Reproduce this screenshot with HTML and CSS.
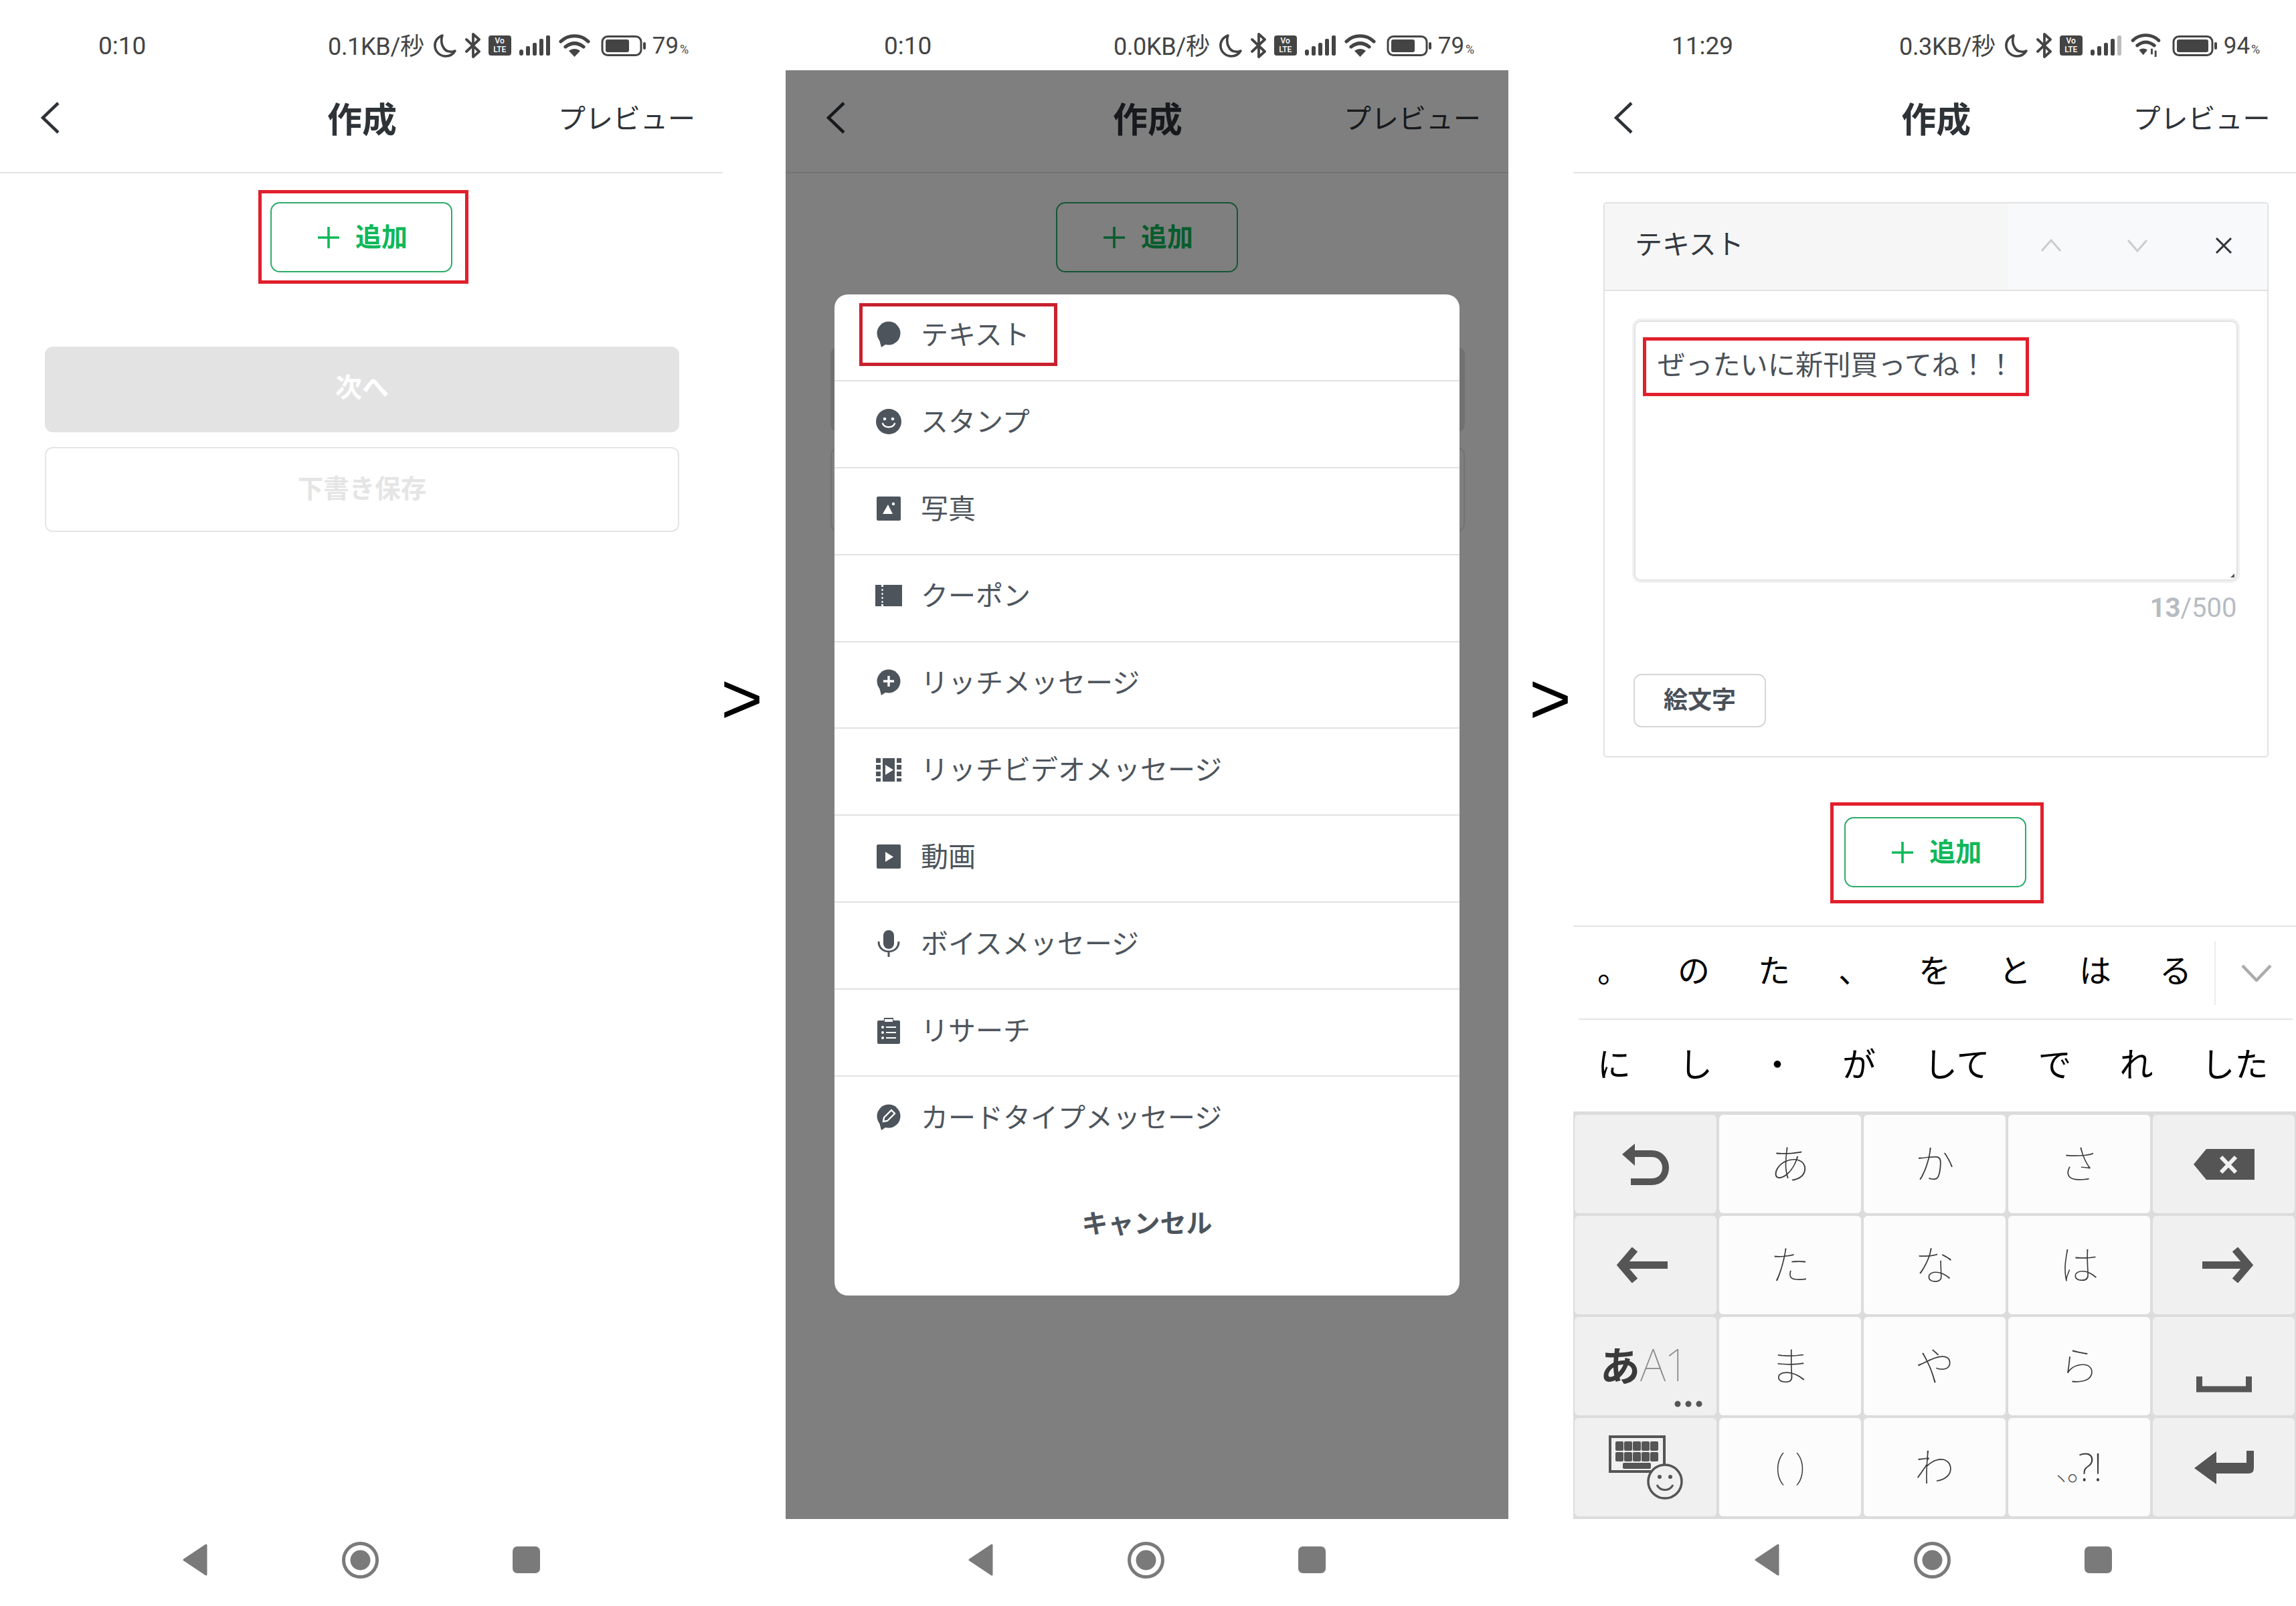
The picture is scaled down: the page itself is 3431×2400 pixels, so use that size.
FILE: index.html
```html
<!DOCTYPE html>
<html lang="ja">
<head>
<meta charset="utf-8">
<title>作成</title>
<link rel="stylesheet" href="styles.css">
</head>
<body>
<svg class="sprites" xmlns="http://www.w3.org/2000/svg">
  <symbol id="s-moon" viewBox="0 0 37 37"><path d="M15 3C7 6 3 13 4 20c1 8 8 14 16 14 6 0 11-3 14-8-3 1-5 2-8 1C17 27 11 14 15 3z" fill="none" stroke="currentColor" stroke-width="3.6" stroke-linejoin="round"/></symbol>
  <symbol id="s-bt" viewBox="0 0 23 38"><path d="M2 10l19 18-9 8V2l9 8L2 28" fill="none" stroke="currentColor" stroke-width="3.8" stroke-linejoin="round" stroke-linecap="round"/></symbol>
  <symbol id="s-signal" viewBox="0 0 47 30"><g fill="currentColor"><rect x="0" y="21" width="6" height="9" rx="3"/><rect x="10" y="16" width="6" height="14" rx="2"/><rect x="20" y="11" width="6" height="19" rx="2"/><rect x="30" y="5" width="6" height="25" rx="2"/><rect x="40" y="0" width="6" height="30" rx="2"/></g></symbol>
  <symbol id="s-signal-weak" viewBox="0 0 47 30"><g fill="currentColor"><rect x="0" y="21" width="6" height="9" rx="3"/><rect x="10" y="16" width="6" height="14" rx="2"/><rect x="20" y="11" width="6" height="19" rx="2"/><rect x="30" y="5" width="6" height="25" rx="2"/></g><rect x="40" y="0" width="6" height="30" rx="2" fill="#bdbdbd"/></symbol>
  <symbol id="s-wifi" viewBox="0 0 47 34"><g fill="none" stroke="currentColor" stroke-width="5.2" stroke-linecap="round"><path d="M3 11C14 0 33 0 44 11"/><path d="M10 19c9-7 18-7 27 0"/></g><path d="M15 25c5-4 12-4 17 0l-8.500 9z" fill="currentColor"/></symbol>
  <symbol id="s-wifi-data" viewBox="0 0 47 38"><g fill="none" stroke="currentColor" stroke-width="5.2" stroke-linecap="round"><path d="M3 11C14 0 33 0 44 11"/><path d="M10 19c9-7 18-7 27 0"/></g><path d="M13 26c4-3 9-3 13 0l-6.500 8z" fill="currentColor"/><path d="M33 24v9M39 27v10" stroke="currentColor" stroke-width="3" fill="none"/></symbol>
  <symbol id="s-battery" viewBox="0 0 72 31"><rect x="6" y="1.500" width="58" height="28" rx="8" fill="none" stroke="currentColor" stroke-width="3"/><rect x="11" y="6" width="35" height="19" rx="3" fill="currentColor"/><rect x="67" y="10" width="4" height="11" rx="2" fill="currentColor"/></symbol>
  <symbol id="s-battery-full" viewBox="0 0 72 31"><rect x="6" y="1.500" width="58" height="28" rx="8" fill="none" stroke="currentColor" stroke-width="3"/><rect x="11" y="6" width="47" height="19" rx="3" fill="currentColor"/><rect x="67" y="10" width="4" height="11" rx="2" fill="currentColor"/></symbol>

  <symbol id="i-text" viewBox="0 0 40 40"><circle cx="20" cy="18" r="17.500"/><path d="M5 24l4 15 9-6z"/></symbol>
  <symbol id="i-stamp" viewBox="0 0 40 40"><circle cx="20" cy="20" r="19"/><circle cx="14" cy="16" r="2.300" fill="#fff"/><circle cx="26" cy="16" r="2.300" fill="#fff"/><path d="M11 23c3 7 15 7 18 0" fill="none" stroke="#fff" stroke-width="2.400" stroke-linecap="round"/></symbol>
  <symbol id="i-photo" viewBox="0 0 40 40"><rect x="2" y="2" width="36" height="36" rx="2"/><path d="M11 28l8-14 7 14z" fill="#fff"/><circle cx="27" cy="13" r="2.200" fill="#fff"/></symbol>
  <symbol id="i-coupon" viewBox="0 0 40 40"><path d="M0 4h9v3h3V4h28v32H12v-3H9v3H0z"/><path d="M10.500 10v21" stroke="#fff" stroke-width="2" stroke-dasharray="3 3" fill="none"/></symbol>
  <symbol id="i-rich" viewBox="0 0 40 40"><circle cx="20" cy="18" r="17.500"/><path d="M5 24l4 15 9-6z"/><path d="M20 10v16M12 18h16" stroke="#fff" stroke-width="3.400" fill="none"/></symbol>
  <symbol id="i-film" viewBox="0 0 40 40"><path d="M1 3h7v7H1zM1 13h7v7H1zM1 23h7v7H1zM1 33h7v5H1zM32 3h7v7h-7zM32 13h7v7h-7zM32 23h7v7h-7zM32 33h7v5h-7zM11 3h18v35H11z"/><path d="M15 13v15l12-7.500z" fill="#fff"/></symbol>
  <symbol id="i-video" viewBox="0 0 40 40"><rect x="2" y="2" width="36" height="36" rx="2"/><path d="M15 13v15l12-7.500z" fill="#fff"/></symbol>
  <symbol id="i-mic" viewBox="0 0 40 40"><rect x="12" y="0" width="16" height="28" rx="8"/><path d="M5 17c0 20 30 20 30 0M20 31v9" fill="none" stroke="#4d545c" stroke-width="3"/></symbol>
  <symbol id="i-clip" viewBox="0 0 40 40"><path d="M5 5h8V1h14v4h8a2 2 0 0 1 2 2v31a2 2 0 0 1-2 2H5a2 2 0 0 1-2-2V7a2 2 0 0 1 2-2z"/><g fill="#fff"><rect x="14" y="3" width="12" height="4"/><circle cx="11" cy="15" r="2"/><circle cx="11" cy="23" r="2"/><circle cx="11" cy="31" r="2"/><rect x="16" y="14" width="15" height="2"/><rect x="16" y="22" width="15" height="2"/><rect x="16" y="30" width="15" height="2"/></g></symbol>
  <symbol id="i-card" viewBox="0 0 40 40"><circle cx="20" cy="18" r="17.500"/><path d="M5 24l4 15 9-6z"/><path d="M12 26l1-6 11-11 5 5-11 11z" fill="none" stroke="#fff" stroke-width="2.400"/></symbol>

  <symbol id="n-back" viewBox="0 0 40 50"><path d="M37 3v44L4 25z" stroke="currentColor" stroke-width="3" stroke-linejoin="round" fill="currentColor"/></symbol>
  <symbol id="n-home" viewBox="0 0 55 55"><circle cx="27.500" cy="27.500" r="25" fill="none" stroke="currentColor" stroke-width="5"/><circle cx="27.500" cy="27.500" r="15" fill="currentColor"/></symbol>
  <symbol id="n-recent" viewBox="0 0 41 40"><rect width="41" height="40" rx="7" fill="currentColor"/></symbol>
</svg>

<div class="screens">

  <!-- 1 -->
  <section class="phone">
    <div class="status">
      <span class="clock">0:10</span>
      <div class="indicators">
        <span class="speed">0.1KB/秒</span>
        <svg class="st-moon"><use href="#s-moon"/></svg>
        <svg class="st-bt"><use href="#s-bt"/></svg>
        <span class="volte"><b>Vo</b><b>LTE</b></span>
        <svg class="st-signal"><use href="#s-signal"/></svg>
        <svg class="st-wifi"><use href="#s-wifi"/></svg>
        <svg class="st-battery"><use href="#s-battery"/></svg>
        <span class="pct">79<small>%</small></span>
      </div>
    </div>
    <header class="topbar">
      <svg class="back" viewBox="0 0 30 48"><path d="M27 2L4 24l23 22" fill="none" stroke="currentColor" stroke-width="4.500"/></svg>
      <h1 class="title">作成</h1>
      <span class="preview">プレビュー</span>
    </header>
    <main class="body">
      <div class="add-row">
        <button class="add">
          <svg class="plus" viewBox="0 0 32 32"><path d="M16 0v32M0 16h32" stroke="currentColor" stroke-width="3.600"/></svg>
          <span class="add-label">追加</span>
          <i class="callout callout-add1"></i>
        </button>
      </div>
      <div class="actions">
        <button class="next">次へ</button>
        <button class="draft">下書き保存</button>
      </div>
    </main>
    <nav class="navbar">
      <svg class="nv-back"><use href="#n-back"/></svg>
      <svg class="nv-home"><use href="#n-home"/></svg>
      <svg class="nv-recent"><use href="#n-recent"/></svg>
    </nav>
  </section>

  <div class="sep sep-first">&gt;</div>

  <!-- 2 -->
  <section class="phone">
    <div class="status">
      <span class="clock">0:10</span>
      <div class="indicators">
        <span class="speed">0.0KB/秒</span>
        <svg class="st-moon"><use href="#s-moon"/></svg>
        <svg class="st-bt"><use href="#s-bt"/></svg>
        <span class="volte"><b>Vo</b><b>LTE</b></span>
        <svg class="st-signal"><use href="#s-signal"/></svg>
        <svg class="st-wifi"><use href="#s-wifi"/></svg>
        <svg class="st-battery"><use href="#s-battery"/></svg>
        <span class="pct">79<small>%</small></span>
      </div>
    </div>
    <header class="topbar">
      <svg class="back" viewBox="0 0 30 48"><path d="M27 2L4 24l23 22" fill="none" stroke="currentColor" stroke-width="4.500"/></svg>
      <h1 class="title">作成</h1>
      <span class="preview">プレビュー</span>
    </header>
    <main class="body">
      <div class="add-row">
        <button class="add">
          <svg class="plus" viewBox="0 0 32 32"><path d="M16 0v32M0 16h32" stroke="currentColor" stroke-width="3.600"/></svg>
          <span class="add-label">追加</span>
        </button>
      </div>
      <div class="actions">
        <button class="next">次へ</button>
        <button class="draft">下書き保存</button>
      </div>
    </main>
    <nav class="navbar">
      <svg class="nv-back"><use href="#n-back"/></svg>
      <svg class="nv-home"><use href="#n-home"/></svg>
      <svg class="nv-recent"><use href="#n-recent"/></svg>
    </nav>
    <div class="overlay">
      <div class="sheet">
        <ul class="menu">
          <li class="item"><svg class="ico"><use href="#i-text"/></svg><span class="item-label">テキスト</span><i class="callout callout-item"></i></li>
          <li class="item"><svg class="ico"><use href="#i-stamp"/></svg><span class="item-label">スタンプ</span></li>
          <li class="item"><svg class="ico"><use href="#i-photo"/></svg><span class="item-label">写真</span></li>
          <li class="item"><svg class="ico"><use href="#i-coupon"/></svg><span class="item-label">クーポン</span></li>
          <li class="item"><svg class="ico"><use href="#i-rich"/></svg><span class="item-label">リッチメッセージ</span></li>
          <li class="item"><svg class="ico"><use href="#i-film"/></svg><span class="item-label">リッチビデオメッセージ</span></li>
          <li class="item"><svg class="ico"><use href="#i-video"/></svg><span class="item-label">動画</span></li>
          <li class="item"><svg class="ico"><use href="#i-mic"/></svg><span class="item-label">ボイスメッセージ</span></li>
          <li class="item"><svg class="ico"><use href="#i-clip"/></svg><span class="item-label">リサーチ</span></li>
          <li class="item"><svg class="ico"><use href="#i-card"/></svg><span class="item-label">カードタイプメッセージ</span></li>
        </ul>
        <div class="cancel">キャンセル</div>
      </div>
    </div>
  </section>

  <div class="sep sep-second">&gt;</div>

  <!-- 3 -->
  <section class="phone">
    <div class="status status-late">
      <span class="clock">11:29</span>
      <div class="indicators">
        <span class="speed">0.3KB/秒</span>
        <svg class="st-moon"><use href="#s-moon"/></svg>
        <svg class="st-bt"><use href="#s-bt"/></svg>
        <span class="volte"><b>Vo</b><b>LTE</b></span>
        <svg class="st-signal"><use href="#s-signal-weak"/></svg>
        <svg class="st-wifi"><use href="#s-wifi-data"/></svg>
        <svg class="st-battery"><use href="#s-battery-full"/></svg>
        <span class="pct">94<small>%</small></span>
      </div>
    </div>
    <header class="topbar">
      <svg class="back" viewBox="0 0 30 48"><path d="M27 2L4 24l23 22" fill="none" stroke="currentColor" stroke-width="4.500"/></svg>
      <h1 class="title">作成</h1>
      <span class="preview">プレビュー</span>
    </header>
    <main class="body">
      <article class="card">
        <div class="card-head">
          <span class="card-title">テキスト</span>
          <div class="card-tools">
            <span class="tool"><svg viewBox="0 0 32 20"><path d="M2 18L16 2l14 16" fill="none" stroke="#ccc" stroke-width="3"/></svg></span>
            <span class="tool"><svg viewBox="0 0 32 20"><path d="M2 2l14 16L30 2" fill="none" stroke="#ccc" stroke-width="3"/></svg></span>
            <span class="tool"><svg class="tool-x" viewBox="0 0 28 24"><path d="M3 1l22 22M25 1L3 23" fill="none" stroke="#2e3338" stroke-width="3"/></svg></span>
          </div>
        </div>
        <div class="card-body">
          <div class="field">
            <span class="field-text">ぜったいに新刊買ってね！！<i class="callout callout-text"></i></span>
            <svg class="grip" viewBox="0 0 8 8"><path d="M7 1v6H1z" fill="#555"/></svg>
          </div>
          <div class="count"><b>13</b>/500</div>
          <button class="emoji">絵文字</button>
        </div>
      </article>
      <div class="add-row add-row-card">
        <button class="add">
          <svg class="plus" viewBox="0 0 32 32"><path d="M16 0v32M0 16h32" stroke="currentColor" stroke-width="3.600"/></svg>
          <span class="add-label">追加</span>
          <i class="callout callout-add3"></i>
        </button>
      </div>
    </main>
    <div class="candidates">
      <div class="cand-top">
        <span class="cand cand-fixed">。</span><span class="cand cand-fixed">の</span><span class="cand cand-fixed">た</span><span class="cand cand-fixed">、</span><span class="cand cand-fixed">を</span><span class="cand cand-fixed">と</span><span class="cand cand-fixed">は</span><span class="cand cand-fixed">る</span>
        <span class="cand-more"><svg viewBox="0 0 46 26"><path d="M2 2l21 22L44 2" fill="none" stroke="#ababab" stroke-width="4.500"/></svg></span>
      </div>
      <div class="cand-bottom">
        <span class="cand">に</span><span class="cand">し</span><span class="cand">・</span><span class="cand">が</span><span class="cand">して</span><span class="cand">で</span><span class="cand">れ</span><span class="cand">した</span>
      </div>
    </div>
    <div class="keyboard">
      <div class="key fn"><svg class="k-undo" viewBox="0 0 70 62"><path d="M16 15H44C58 15 65 26 65 36 65 48 57 57 44 57H13" fill="none" stroke="#555" stroke-width="10"/><path d="M0 16L19 0v33z" fill="#555"/></svg></div>
      <div class="key">あ</div>
      <div class="key">か</div>
      <div class="key">さ</div>
      <div class="key fn"><svg class="k-del" viewBox="0 0 91 46"><path d="M0 23L19 0h72v46H19z" fill="#555"/><path d="M41 12l22 23M63 12L41 35" stroke="#f0f0f0" stroke-width="6" fill="none"/></svg></div>

      <div class="key fn"><svg class="k-arrow k-arrow-left" viewBox="0 0 77 53"><path d="M8 26.500h69" stroke="#555" stroke-width="11" fill="none"/><path d="M28 3L8 26.500 28 50" stroke="#555" stroke-width="11" fill="none"/></svg></div>
      <div class="key">た</div>
      <div class="key">な</div>
      <div class="key">は</div>
      <div class="key fn"><svg class="k-arrow k-arrow-right" viewBox="0 0 77 53"><path d="M0 26.500h69" stroke="#555" stroke-width="11" fill="none"/><path d="M49 3l20 23.500L49 50" stroke="#555" stroke-width="11" fill="none"/></svg></div>

      <div class="key fn k-mode"><span class="mode-on">あ</span><span class="mode-off">A1</span>
        <svg class="k-dots" viewBox="0 0 42 10"><g fill="#555"><circle cx="5" cy="5" r="4.500"/><circle cx="21" cy="5" r="4.500"/><circle cx="37" cy="5" r="4.500"/></g></svg>
      </div>
      <div class="key">ま</div>
      <div class="key">や</div>
      <div class="key">ら</div>
      <div class="key fn"><svg class="k-space" viewBox="0 0 83 24"><path d="M4.500 0v19h74V0" fill="none" stroke="#555" stroke-width="9"/></svg></div>

      <div class="key fn"><svg class="k-kbd" viewBox="0 0 111 96"><path d="M2 2h81v52H2z" fill="none" stroke="#555" stroke-width="4"/><g fill="#555"><rect x="10" y="9" width="12" height="14" rx="2"/><rect x="23" y="9" width="12" height="14" rx="2"/><rect x="36" y="9" width="12" height="14" rx="2"/><rect x="49" y="9" width="12" height="14" rx="2"/><rect x="62" y="9" width="12" height="14" rx="2"/><rect x="10" y="25" width="12" height="14" rx="2"/><rect x="23" y="25" width="12" height="14" rx="2"/><rect x="36" y="25" width="12" height="14" rx="2"/><rect x="49" y="25" width="12" height="14" rx="2"/><rect x="62" y="25" width="12" height="14" rx="2"/><rect x="21" y="41" width="42" height="9" rx="2"/></g><circle cx="84" cy="69" r="25" fill="#f0f0f0" stroke="#555" stroke-width="3.500"/><circle cx="76" cy="62" r="3" fill="#555"/><circle cx="92" cy="62" r="3" fill="#555"/><path d="M72 74c5 10 19 10 24 0" fill="none" stroke="#555" stroke-width="3"/></svg></div>
      <div class="key k-parens">( )</div>
      <div class="key">わ</div>
      <div class="key k-punct"><span class="punct-small">､｡</span><span class="punct-big">?!</span></div>
      <div class="key fn"><svg class="k-enter" viewBox="0 0 89 50"><path d="M0 26L33 1v17h45V0h11v26q0 8-8 8H33v16z" fill="#555"/></svg></div>
    </div>
    <nav class="navbar navbar-kbd">
      <svg class="nv-back"><use href="#n-back"/></svg>
      <svg class="nv-home"><use href="#n-home"/></svg>
      <svg class="nv-recent"><use href="#n-recent"/></svg>
    </nav>
  </section>
</div>
</body>
</html>
```

FILE: styles.css
```css
* { box-sizing: border-box; }
html, body { margin: 0; padding: 0; background: #fff; }
body { font-family: "Noto Sans CJK JP", "Noto Sans", sans-serif; color: #33383e; }
.sprites { position: absolute; width: 0; height: 0; overflow: hidden; }
button { font: inherit; padding: 0; cursor: pointer; }
ul { margin: 0; padding: 0; list-style: none; }
h1 { margin: 0; }
i { font-style: normal; }

.screens { display: flex; width: 3431px; height: 2400px; overflow: hidden; }
.phone { position: relative; flex: 0 0 1080px; height: 2400px; display: flex; flex-direction: column; background: #fff; }

.sep { font-family: "Liberation Sans", sans-serif; font-size: 108px; color: #000; height: 2400px; flex: 0 0 auto; line-height: 2088px; }
.sep-first { width: 94px; text-indent: -3px; }
.sep-second { width: 97px; padding-left: 31px; }

/* status bar */
.status { height: 105px; flex: none; display: flex; align-items: center; padding: 31px 0 0 147px; color: #444; font-family: Roboto, "Noto Sans CJK JP", sans-serif; }
.clock { flex: 0 0 343px; font-size: 37px; }
.status-late .clock { flex-basis: 340px; }
.indicators { display: flex; align-items: center; gap: 12px; font-size: 36px; }
.speed { letter-spacing: -0.3px; white-space: nowrap; padding-bottom: 4px; }
.st-moon { width: 37px; height: 37px; }
.st-bt { width: 23px; height: 38px; }
.st-signal { width: 47px; height: 30px; }
.st-wifi { width: 47px; height: 36px; }
.st-battery { width: 72px; height: 31px; }
.volte { width: 34px; height: 30px; border-radius: 4px; background: #444; color: #fff; display: flex; flex-direction: column; align-items: center; justify-content: center; font-size: 12px; line-height: 13px; }
.volte b { font-weight: 500; }
.pct { font-size: 35px; white-space: nowrap; margin-left: -3px; }
.pct small { font-size: 18px; margin-left: 2px; }

/* top bar */
.topbar { height: 154px; border-bottom: 2px solid #e4e4e4; display: grid; grid-template-columns: 1fr auto 1fr; align-items: center; padding: 0 41px 10px 43px; flex: none; color: #2e3338; }
.back { width: 30px; height: 48px; margin-left: 17px; }
.title { font-size: 52px; font-weight: 700; line-height: 1.2; }
.preview { justify-self: end; font-size: 41px; font-weight: 400; line-height: 1.2; margin-bottom: 3px; }

.body { flex: 1; min-height: 0; }

.add-row { display: flex; justify-content: center; padding-top: 43px; }
.add { position: relative; width: 272px; height: 105px; background: #fff; border: 2px solid #2dab68; border-radius: 14px; display: flex; align-items: center; justify-content: center; gap: 24px; padding-left: 4px; color: #0fb85a; font-size: 39px; font-weight: 700; }
.add-label { padding-bottom: 8px; }
.plus { width: 32px; height: 32px; }
.add-row-card { padding-top: 89px; }

.callout { position: absolute; border: 5px solid #e0202c; pointer-events: none; }
.callout-add1 { left: -20px; right: -26px; top: -20px; bottom: -19px; }
.callout-add3 { left: -23px; right: -28px; top: -24px; bottom: -26px; }
.callout-item { left: 37px; top: 13px; width: 296px; height: 94px; border-color: #c9202e; }
.callout-text { left: -22px; right: -22px; top: -9px; bottom: -21px; }

.actions { display: flex; flex-direction: column; gap: 22px; padding: 111px 65px 0 67px; }
.next { height: 128px; border: 0; border-radius: 12px; background: #e3e3e3; color: #fff; font-size: 40px; font-weight: 700; padding-bottom: 12px; }
.draft { height: 127px; background: #fff; border: 2px solid #e5e5e5; border-radius: 12px; color: #e5e5e5; font-size: 38.500px; font-weight: 700; padding-bottom: 10px; }

/* nav bar */
.navbar { flex: none; height: 130px; display: flex; align-items: center; padding: 0 0 8px 271px; color: #7a7a7a; gap: 200px; background: #fff; }
.navbar-kbd { padding-left: 269px; }
.nv-back { width: 40px; height: 50px; }
.nv-home { width: 55px; height: 55px; }
.nv-recent { width: 41px; height: 40px; }

/* overlay + action sheet */
.overlay { position: absolute; left: 0; right: 0; top: 105px; bottom: 130px; background: rgba(0, 0, 0, .5); padding: 335px 73px 0; }
.sheet { background: #fff; border-radius: 20px; height: 1496px; overflow: hidden; }
.item { position: relative; height: 129.900px; display: flex; align-items: center; gap: 28px; padding: 0 0 7px 61px; border-bottom: 2px solid #e2e2e2; font-size: 41px; color: #4d545c; }
.item:last-child { border-bottom: 0; }
.item-label { padding-bottom: 6px; }
.ico { width: 40px; height: 40px; fill: #4d545c; flex: none; }
.cancel { text-align: center; padding-top: 60px; font-size: 39px; font-weight: 700; color: #4d545c; line-height: 52px; }

/* third screen: editor card */
.card { margin: 43px 44px 0 45px; border: 2px solid #e2e2e2; border-radius: 5px; }
.card-head { height: 131px; display: flex; border-bottom: 2px solid #e2e2e2; }
.card-title { flex: 0 0 603px; background: #f6f6f6; padding: 0 0 14px 45px; display: flex; align-items: center; font-size: 41px; color: #33383e; }
.card-tools { flex: 1; display: flex; background: #f8f9fb; }
.tool { flex: 1; display: flex; align-items: center; justify-content: center; padding-bottom: 4px; }
.tool svg { width: 32px; height: 20px; }
.tool .tool-x { width: 28px; height: 24px; }
.card-body { padding: 44px 43px 43px; }
.field { position: relative; height: 389px; margin: 0 1px; border: 2px solid #e2e2e4; border-radius: 10px; box-shadow: 0 0 0 3px #f1f1f1; padding: 32px 0 0 33px; font-size: 41.200px; line-height: 58px; color: #4a5058; }
.field-text { position: relative; display: inline-block; }
.grip { position: absolute; right: 2px; bottom: 2px; width: 8px; height: 8px; }
.count { margin-top: 19px; text-align: right; padding-right: 2px; font-family: Roboto, sans-serif; font-size: 40px; line-height: 44px; color: #b7bcc2; }
.emoji { display: block; margin-top: 76px; width: 198px; height: 80px; background: #fff; border: 2px solid #d6d6d6; border-radius: 12px; font-size: 36px; font-weight: 700; color: #4a5058; padding-bottom: 8px; }

/* third screen: candidates */
.candidates { flex: none; height: 278px; border-top: 2px solid #e4e4e4; color: #000; }
.cand-top { display: flex; height: 137px; align-items: center; padding-bottom: 14px; }
.cand-bottom { display: flex; height: 139px; align-items: center; margin: 0 8px; border-top: 2px solid #e4e4e4; padding-bottom: 12px; }
.cand { font-size: 50px; padding: 0 36px; line-height: 60px; white-space: nowrap; }
.cand-bottom .cand:first-child { margin-left: -8px; }
.cand-fixed { flex: 0 0 120px; padding: 0; text-align: center; font-size: 48px; }
.cand-more { flex: 1; margin-left: -2px; height: 96px; border-left: 2px solid #ececec; display: flex; align-items: center; justify-content: center; margin-top: 14px; }
.cand-more svg { width: 46px; height: 26px; }

/* third screen: keyboard */
.keyboard { flex: none; height: 609px; background: #dcdcdc; padding: 5px 0 4px 2px; display: grid; grid-template-columns: repeat(5, 212px); grid-auto-rows: 147px; gap: 4px; }
.key { position: relative; border-radius: 6px; background: #fcfcfc; display: flex; align-items: center; justify-content: center; font-size: 60px; font-weight: 100; color: #3c3c3c; padding-bottom: 8px; }
.fn { background: #f0f0f0; padding-bottom: 0; }
.k-undo { width: 70px; height: 62px; }
.k-del { width: 91px; height: 46px; }
.k-arrow { width: 77px; height: 53px; }
.k-arrow-left { margin-right: 12px; }
.k-arrow-right { margin-left: 12px; }
.k-space { width: 83px; height: 24px; margin-top: 54px; }
.k-kbd { width: 111px; height: 96px; }
.k-enter { width: 89px; height: 50px; }
.k-mode { justify-content: flex-start; padding: 0 0 8px 38px; }
.mode-on { font-size: 60px; font-weight: 700; color: #3a3a3a; }
.mode-off { font-family: "Noto Sans", sans-serif; font-size: 66px; font-weight: 100; color: #888; letter-spacing: -2px; }
.k-dots { position: absolute; right: 21px; bottom: 12px; width: 42px; height: 10px; }
.k-parens { font-family: "Noto Sans", sans-serif; font-size: 56px; font-weight: 100; }
.k-punct { align-items: baseline; padding-top: 32px; }
.punct-small { font-size: 42px; letter-spacing: -5px; }
.punct-big { font-family: "Noto Sans", sans-serif; font-size: 58px; font-weight: 200; letter-spacing: -1px; }
```
